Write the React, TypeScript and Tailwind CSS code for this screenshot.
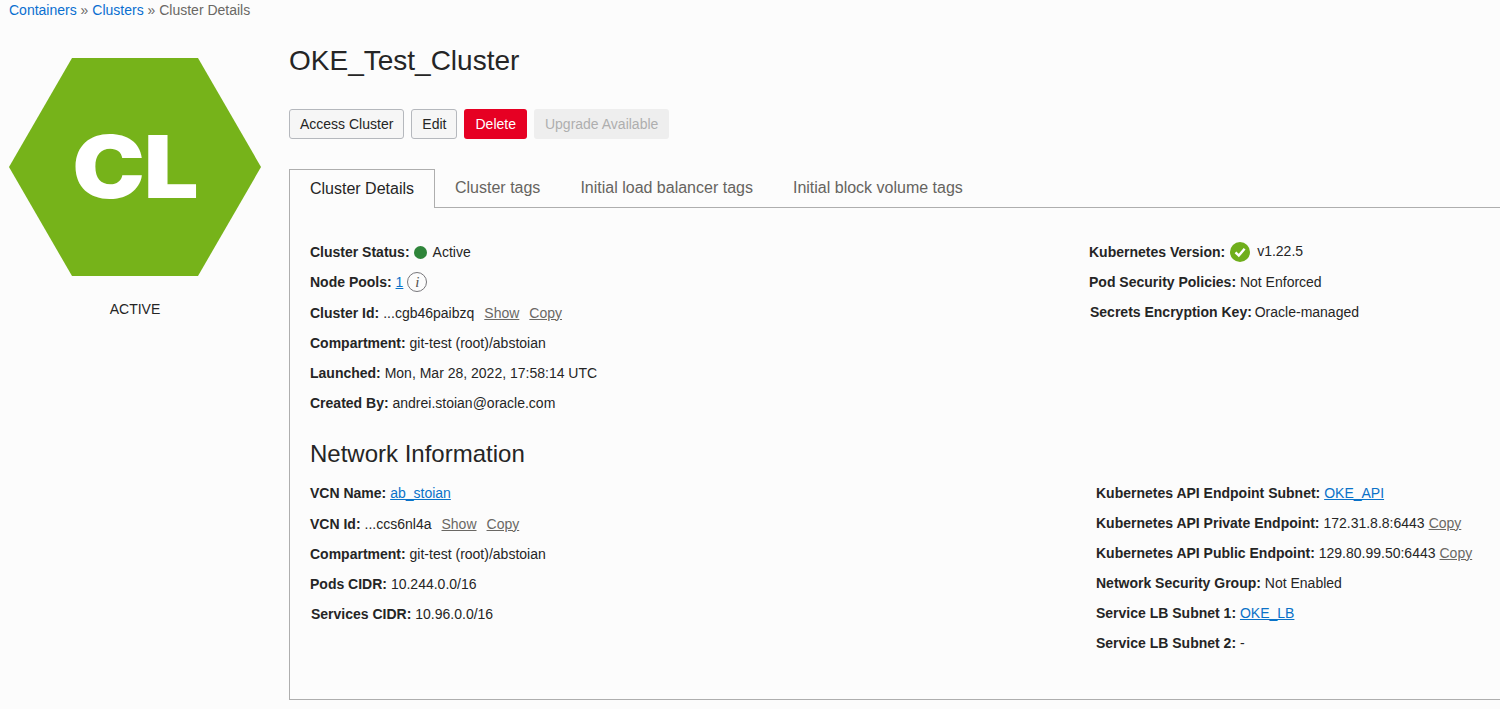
import React from "react";

const Row = ({ label, children, className = "" }: { label: string; children?: React.ReactNode; className?: string }) => (
  <div className={`flex h-[30px] items-center whitespace-pre ${className}`}>
    <b className="font-bold">{label}</b>
    {children}
  </div>
);
const A = ({ children }: { children: React.ReactNode }) => <span className="text-[#0a72c8] underline">{children}</span>;
const G = ({ children, className = "" }: { children: React.ReactNode; className?: string }) => (
  <span className={`text-[#6a6864] underline ${className}`}>{children}</span>
);

export default function App() {
  return (
    <div className="h-[709px] w-[1500px] overflow-hidden bg-[#fcfcfc] font-['Liberation_Sans',Arial,sans-serif] text-[14px] text-[#252525]">
      <div className="h-[21px] pl-[9px] leading-[21px] text-[#6a6864]">
        <span className="text-[#0a6fd0]">Containers</span> » <span className="text-[#0a6fd0]">Clusters</span> » Cluster Details
      </div>
      <div className="flex">
        <div className="w-[289px] shrink-0">
          <div className="relative ml-[9px] mt-[37px] h-[218px] w-[252px]">
            <svg width="252" height="218" viewBox="0 0 252 218" className="block">
              <polygon points="63,0 189,0 252,109 189,218 63,218 0,109" fill="#76b31a" />
            </svg>
            <div className="absolute inset-x-0 top-[66px] scale-x-[1.13] text-center font-['Inter',sans-serif] text-[86px] font-black leading-[86px] tracking-[-1px] text-white">CL</div>
          </div>
          <div className="mt-[25px] w-[270px] text-center leading-[16px]">ACTIVE</div>
        </div>
        <div className="min-w-0 flex-1">
          <h1 className="mt-[22px] h-[36px] text-[28px] leading-[36px]">OKE_Test_Cluster</h1>
          <div className="mt-[30px] flex gap-[7px]">
            <button className="h-[30px] rounded-[3px] border border-[#b5b8bd] bg-[#f6f6f6] px-[10px]">Access Cluster</button>
            <button className="h-[30px] rounded-[3px] border border-[#b5b8bd] bg-[#f6f6f6] px-[10px]">Edit</button>
            <button className="h-[30px] rounded-[3px] bg-[#e60023] px-[11px] text-white">Delete</button>
            <button className="h-[30px] rounded-[3px] bg-[#eeeeee] px-[11px] text-[#aeaeae]">Upgrade Available</button>
          </div>
          <div className="mt-[30px] flex h-[39px] items-stretch border-b border-[#aeaeae] text-[16px] text-[#66645f]">
            <div className="mb-[-1px] flex w-[146px] items-center justify-center border border-b-0 border-[#aeaeae] bg-[#fcfcfc] text-[#252525]">Cluster Details</div>
            <div className="ml-[20px] flex items-center">Cluster tags</div>
            <div className="ml-[40px] flex items-center">Initial load balancer tags</div>
            <div className="ml-[40px] flex items-center">Initial block volume tags</div>
          </div>
          <div className="h-[492px] border-b border-l border-[#aeaeae] pl-[20px] pt-[29px]">
            <div className="flex h-[181px]">
              <div className="w-[779px] shrink-0">
                <Row label="Cluster Status:">
                  <span className="ml-[4px] h-[13px] w-[13px] rounded-full bg-[#2f853a]" />
                  <span className="ml-[6px]">Active</span>
                </Row>
                <Row label="Node Pools: ">
                  <A>1</A>
                  <span className="ml-[4px] flex h-[20px] w-[20px] items-center justify-center rounded-full border border-[#77767a] font-['Liberation_Serif',serif] text-[15px] italic text-[#55534f]">i</span>
                </Row>
                <Row label="Cluster Id:" className="h-[31px] pt-[1px]">
                  <span className="ml-[4px]">...cgb46paibzq</span>
                  <G className="ml-[10px]">Show</G>
                  <G className="ml-[10px]">Copy</G>
                </Row>
                <Row label="Compartment: ">git-test (root)/abstoian</Row>
                <Row label="Launched: ">Mon, Mar 28, 2022, 17:58:14 UTC</Row>
                <Row label="Created By: ">andrei.stoian@oracle.com</Row>
              </div>
              <div>
                <Row label="Kubernetes Version:">
                  <svg width="20" height="20" viewBox="0 0 20 20" className="ml-[5px]">
                    <circle cx="10" cy="10" r="10" fill="#6fae1b" />
                    <path d="M5.5 10.3 8.8 13.6 14.6 6.8" fill="none" stroke="#fff" strokeWidth="2.4" />
                  </svg>
                  <span className="ml-[7px] -translate-y-px">v1.22.5</span>
                </Row>
                <Row label="Pod Security Policies: ">Not Enforced</Row>
                <Row label="Secrets Encryption Key: " className="ml-px"><span className="ml-[-1px]">Oracle-managed</span></Row>
              </div>
            </div>
            <h2 className="mt-[21px] h-[30px] text-[24px] leading-[30px]">Network Information</h2>
            <div className="mt-[9px] flex">
              <div className="w-[786px] shrink-0">
                <Row label="VCN Name: "><A>ab_stoian</A></Row>
                <Row label="VCN Id:" className="h-[31px] pt-[1px]">
                  <span className="ml-[4px]">...ccs6nl4a</span>
                  <G className="ml-[10px]">Show</G>
                  <G className="ml-[10px]">Copy</G>
                </Row>
                <Row label="Compartment: ">git-test (root)/abstoian</Row>
                <Row label="Pods CIDR: ">10.244.0.0/16</Row>
                <Row label="Services CIDR: " className="ml-px">10.96.0.0/16</Row>
              </div>
              <div>
                <Row label="Kubernetes API Endpoint Subnet: "><A>OKE_API</A></Row>
                <Row label="Kubernetes API Private Endpoint: ">172.31.8.8:6443<G className="ml-[4px]">Copy</G></Row>
                <Row label="Kubernetes API Public Endpoint: ">129.80.99.50:6443<G className="ml-[4px]">Copy</G></Row>
                <Row label="Network Security Group: ">Not Enabled</Row>
                <Row label="Service LB Subnet 1: "><A>OKE_LB</A></Row>
                <Row label="Service LB Subnet 2: ">-</Row>
              </div>
            </div>
          </div>
        </div>
      </div>
    </div>
  );
}
